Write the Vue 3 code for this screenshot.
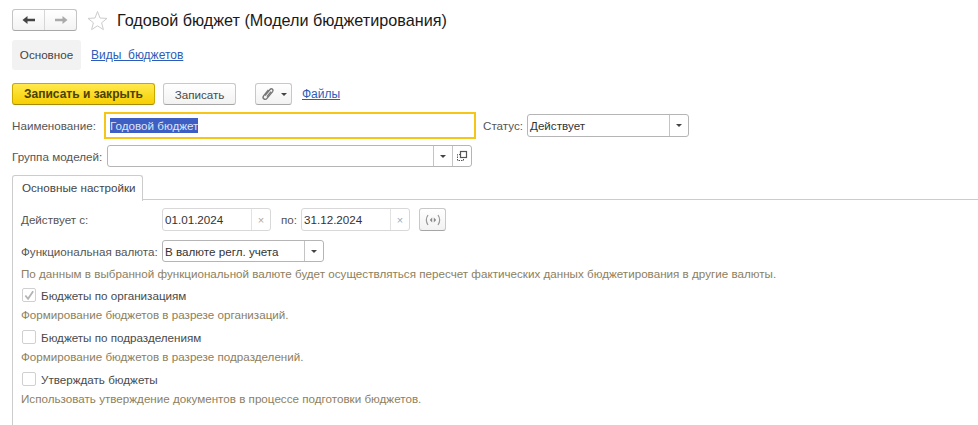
<template>
  <div class="form">
    <div class="head">
      <div class="nav-group">
        <button class="nav-btn">
          <svg width="14" height="10" viewBox="0 0 14 10"><path d="M0.5 5 L5.5 1 V3.8 H13 V6.2 H5.5 V9 Z" fill="#444" /></svg>
        </button>
        <button class="nav-btn">
          <svg width="14" height="10" viewBox="0 0 14 10"><path d="M13.5 5 L8.5 1 V3.8 H1 V6.2 H8.5 V9 Z" fill="#aaa" /></svg>
        </button>
      </div>
      <svg class="star" width="21" height="21" viewBox="0 0 21 21">
        <path d="M10.5 1.5 L13 8 L20 8.4 L14.6 12.8 L16.4 19.6 L10.5 15.8 L4.6 19.6 L6.4 12.8 L1 8.4 L8 8 Z" fill="#fff" stroke="#ccc" />
      </svg>
      <h1 class="title">Годовой бюджет (Модели бюджетирования)</h1>
    </div>

    <div class="sections">
      <div class="section-active">Основное</div>
      <a class="link section-link">Виды&nbsp; бюджетов</a>
    </div>

    <div class="toolbar">
      <button class="btn btn-primary">Записать и закрыть</button>
      <button class="btn btn-save">Записать</button>
      <button class="btn btn-clip">
        <svg width="16" height="16" viewBox="0 0 16 16" fill="none" stroke="#777" stroke-width="1.4">
          <path d="M5 9.5 L10 3.5 C11.5 1.8 14 3.6 12.6 5.6 L7 12.4 C5.2 14.6 1.8 12.4 3.6 9.8 L8.4 4" />
          <path d="M7 10.6 L11 5.6" />
        </svg>
        <span class="caret"></span>
      </button>
      <a class="link files-link">Файлы</a>
    </div>

    <div class="row row-name">
      <label class="lbl lbl-name">Наименование:</label>
      <div class="name-input"><span class="selected">Годовой бюджет</span></div>
      <label class="lbl lbl-status">Статус:</label>
      <div class="field status-field">
        <span class="field-text">Действует</span>
        <span class="field-btn"><span class="caret"></span></span>
      </div>
    </div>

    <div class="row row-group">
      <label class="lbl lbl-group">Группа моделей:</label>
      <div class="field group-field">
        <span class="field-text"></span>
        <span class="field-btn"><span class="caret"></span></span>
        <span class="field-btn">
          <svg width="12" height="12" viewBox="0 0 12 12" fill="none" stroke="#555">
            <rect x="4.5" y="1.5" width="6" height="6" stroke-width="1.2" />
            <path d="M4.5 4.5 H1.5 V10.5 H7.5 V7.5" stroke-dasharray="1.5 1" />
          </svg>
        </span>
      </div>
    </div>

    <div class="tabs">
      <div class="tab">Основные настройки</div>
      <div class="tab-rest"></div>
    </div>

    <div class="tab-body">
      <div class="row row-dates">
        <label class="lbl lbl-wide">Действует с:</label>
        <div class="field date-field">
          <span class="field-text">{{ dateFrom }}</span>
          <span class="field-btn clear">×</span>
        </div>
        <label class="lbl lbl-to">по:</label>
        <div class="field date-field">
          <span class="field-text">{{ dateTo }}</span>
          <span class="field-btn clear">×</span>
        </div>
        <button class="btn btn-period">
          <svg width="16" height="12" viewBox="0 0 16 12" fill="none" stroke="#999" stroke-width="1.2">
            <path d="M3 1 C1 4 1 8 3 11" />
            <path d="M13 1 C15 4 15 8 13 11" />
            <path d="M7.2 3.5 L4.8 6 L7.2 8.5 Z M8.8 3.5 L11.2 6 L8.8 8.5 Z" fill="#888" stroke="none" />
          </svg>
        </button>
      </div>

      <div class="row row-currency">
        <label class="lbl lbl-wide">Функциональная валюта:</label>
        <div class="field currency-field">
          <span class="field-text">В валюте регл. учета</span>
          <span class="field-btn"><span class="caret"></span></span>
        </div>
      </div>
      <p class="hint hint-first">По данным в выбранной функциональной валюте будет осуществляться пересчет фактических данных бюджетирования в другие валюты.</p>

      <div v-for="opt in options" :key="opt.label" class="option">
        <div class="check-row">
          <span class="checkbox">
            <svg v-if="opt.checked" width="13" height="13" viewBox="0 0 13 13" fill="none" stroke="#b4b4b4" stroke-width="2">
              <path d="M2.5 6.5 L5.5 10 L11 2" />
            </svg>
          </span>
          <span class="check-label">{{ opt.label }}</span>
        </div>
        <p class="hint">{{ opt.hint }}</p>
      </div>
    </div>
  </div>
</template>

<script setup>
const dateFrom = '01.01.2024'
const dateTo = '31.12.2024'

const options = [
  { label: 'Бюджеты по организациям', hint: 'Формирование бюджетов в разрезе организаций.', checked: true },
  { label: 'Бюджеты по подразделениям', hint: 'Формирование бюджетов в разрезе подразделений.', checked: false },
  { label: 'Утверждать бюджеты', hint: 'Использовать утверждение документов в процессе подготовки бюджетов.', checked: false },
]
</script>

<style>
html, body { background: #fff; overflow: hidden; }
</style>

<style scoped>
.form { width: 978px; height: 425px; overflow: hidden; box-sizing: border-box; padding: 9px 0 0 12px; font-family: "Liberation Sans", Arial, sans-serif; font-size: 11.65px; color: #4a4a4a; }

.head { display: flex; align-items: center; height: 22px; }
.nav-group { display: flex; width: 65px; height: 22px; box-sizing: border-box; border: 1px solid #c4c4c4; border-bottom-color: #a8a8a8; border-radius: 3px; background: linear-gradient(#fff, #f3f3f3); }
.nav-btn { flex: 1; border: 0; padding: 0; background: none; display: flex; align-items: center; justify-content: center; }
.nav-btn + .nav-btn { border-left: 1px solid #d6d6d6; }
.star { margin-left: 10px; }
.title { margin: 0 0 0 9px; font-size: 16.2px; font-weight: 400; color: #1a1a1a; white-space: nowrap; }

.sections { display: flex; align-items: center; margin-top: 9px; height: 30px; }
.section-active { width: 69px; height: 30px; line-height: 30px; text-align: center; background: #f2f2f2; border-radius: 3px; color: #444; }
.link { color: #2d5cb8; font-size: 12px; text-decoration: underline; white-space: nowrap; }
.section-link { margin-left: 10px; }

.toolbar { display: flex; align-items: center; margin-top: 13px; height: 22px; }
.btn { box-sizing: border-box; height: 22px; padding: 0; border: 1px solid #c8c8c8; border-bottom-color: #a6a6a6; border-radius: 3px; background: linear-gradient(#fff, #f2f2f2); font: inherit; color: #4a4a4a; display: flex; align-items: center; justify-content: center; }
.btn-primary { width: 143px; background: linear-gradient(#ffe94d, #f7cf00); border-color: #c9a800; border-bottom-color: #a68b00; color: #4a4200; font-size: 12px; font-weight: 700; }
.btn-save { width: 73px; margin-left: 8px; }
.btn-clip { width: 37px; margin-left: 19px; gap: 5px; }
.files-link { margin-left: 10px; }
.caret { display: inline-block; width: 0; height: 0; border-left: 3px solid transparent; border-right: 3px solid transparent; border-top: 3px solid #444; }

.row { display: flex; align-items: center; }
.row-name { margin-top: 7px; height: 27px; }
.lbl { white-space: nowrap; color: #555; }
.lbl-name { width: 92px; }
.name-input { box-sizing: border-box; width: 372px; height: 27px; border: 2px solid #f5c518; padding-left: 4px; display: flex; align-items: center; }
.selected { background: #3d5fc4; color: #dfe4f5; line-height: 15px; }
.lbl-status { margin-left: 7px; width: 44px; }
.field { box-sizing: border-box; display: flex; height: 23px; border: 1px solid #b5b5b5; border-radius: 3px; background: #fff; color: #333; }
.field-text { flex: 1; min-width: 0; padding-left: 2px; line-height: 21px; white-space: nowrap; }
.field-btn { width: 18px; border-left: 1px solid #c4c4c4; display: flex; align-items: center; justify-content: center; }
.status-field { width: 162px; }

.row-group { margin-top: 6px; height: 22px; }
.lbl-group { width: 95px; }
.group-field { width: 365px; height: 22px; }

.tabs { display: flex; margin-top: 8px; height: 25px; }
.tab { box-sizing: border-box; width: 131px; height: 26px; line-height: 24px; padding-left: 9px; border: 1px solid #ccc; border-bottom: 0; border-radius: 3px 3px 0 0; background: #fff; position: relative; z-index: 1; color: #444; }
.tab-rest { flex: 1; border-bottom: 1px solid #ccc; }

.tab-body { box-sizing: border-box; height: 240px; padding: 8px 0 0 8px; border-left: 1px solid #ccc; }
.row-dates { height: 23px; }
.lbl-wide { width: 141px; }
.date-field { width: 109px; border-color: #d8d8d8; }
.date-field .field-btn { border-left-color: #e2e2e2; }
.clear { color: #aaa; font-size: 11px; }
.lbl-to { width: 20px; margin-left: 10px; }
.btn-period { width: 27px; height: 23px; margin-left: 9px; }
.row-currency { margin-top: 9px; height: 22px; }
.currency-field { width: 162px; height: 22px; }
.currency-field .field-btn { width: 18px; }

.hint { margin: 0; height: 16px; line-height: 16px; color: #8c8060; white-space: nowrap; }
.hint-first { margin-top: 4px; }
.option { margin-top: 5px; height: 37px; }
.check-row { display: flex; align-items: center; height: 16px; }
.checkbox { box-sizing: border-box; width: 14px; height: 14px; border: 1px solid #d0d0d0; border-radius: 2px; display: flex; align-items: center; justify-content: center; margin-left: 1px; }
.check-label { margin-left: 5px; color: #4a4a4a; }
.option .hint { margin-top: 4px; }
</style>
